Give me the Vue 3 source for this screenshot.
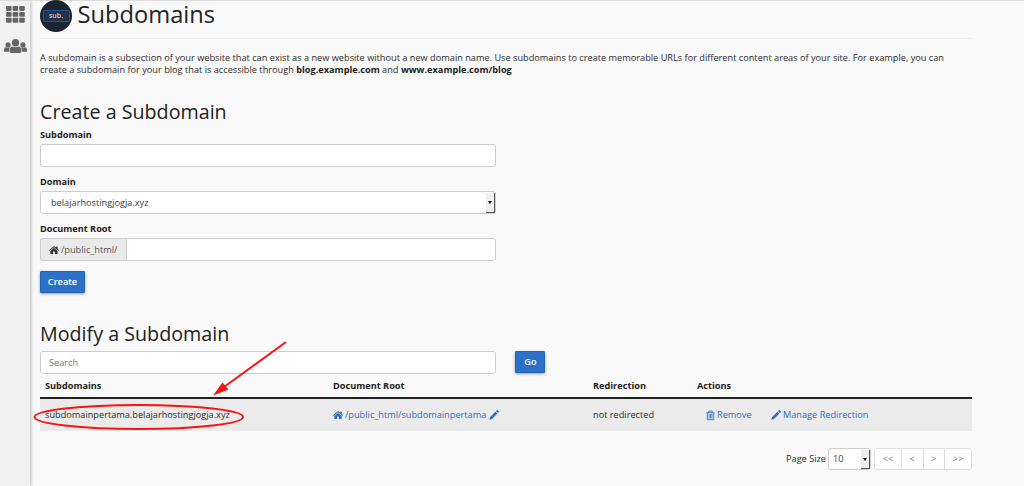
<script setup>
import { ref } from 'vue'

const domain = ref('belajarhostingjogja.xyz')
const subdomain = ref('')
const docRoot = ref('')
const rows = [
  { name: 'subdomainpertama.belajarhostingjogja.xyz', root: '/public_html/subdomainpertama', redirect: 'not redirected' },
]
const pages = ['<<', '<', '>', '>>']
const home = 'M8 1.500 0 8.200l1 1.300 7-5.900 7 5.900 1-1.300-2.200-1.900V2.200h-2.300v2.200zM8 4.700 2.200 9.500v5h4.400v-4h2.800v4h4.400v-5z'
const pencil = 'M1.800 11.200 10.300 2.700l3 3-8.500 8.500L.5 15.500zM11.200 1.800 12.500.5q.7-.6 1.400 0l1.600 1.600q.6.7 0 1.400l-1.300 1.300z'
</script>

<template>
  <div class="page">
    <nav class="side">
      <svg class="grid-icon" viewBox="0 0 19 17">
        <g v-for="r in 3" :key="r">
          <rect v-for="c in 3" :key="c" :x="(c - 1) * 6.6" :y="(r - 1) * 5.900" width="5.600" height="4.900" rx=".8" />
        </g>
      </svg>
      <svg class="people-icon" viewBox="0 0 23 14">
        <circle cx="4.100" cy="5.900" r="2.600" /><circle cx="18.900" cy="5.900" r="2.600" />
        <path d="M0 12.800v-2.300Q0 8.400 2 8.300q2 1 4 .2-1 1.600-.9 4.300zM23 12.800v-2.300q0-2.100-2-2.200-2 1-4 .2 1 1.600.9 4.300z" />
        <circle cx="11.500" cy="3.800" r="3.700" />
        <path d="M5.600 12.200q0-4.600 3-4.700 2.900 1.500 5.800 0 3 .1 3 4.700 0 1.700-1.500 1.700H7.100q-1.500 0-1.500-1.700z" />
      </svg>
    </nav>

    <main class="content">
      <header class="title">
        <span class="logo"><span class="logo-box">sub.</span></span>
        <h1>Subdomains</h1>
      </header>
      <p class="intro">A subdomain is a subsection of your website that can exist as a new website without a new domain name. Use subdomains to create memorable URLs for different content areas of your site. For example, you can<br>create a subdomain for your blog that is accessible through <b>blog.example.com</b> and <b>www.example.com/blog</b></p>

      <h2>Create a Subdomain</h2>
      <section class="form">
        <div class="group">
          <label>Subdomain</label>
          <input v-model="subdomain" class="control">
        </div>
        <div class="group">
          <label>Domain</label>
          <div class="control select"><span>{{ domain }}</span><i class="drop"></i></div>
        </div>
        <div class="group">
          <label>Document Root</label>
          <div class="addon-row">
            <span class="addon"><svg class="ico" viewBox="0 0 16 16"><path :d="home" /></svg>/public_html/</span>
            <input v-model="docRoot" class="control joined">
          </div>
        </div>
        <button class="btn">Create</button>
      </section>

      <h2 class="modify">Modify a Subdomain</h2>
      <div class="search-row">
        <input class="control" placeholder="Search">
        <button class="btn go">Go</button>
      </div>

      <div class="table">
        <div class="tr head">
          <span>Subdomains</span><span>Document Root</span><span>Redirection</span><span>Actions</span>
        </div>
        <div v-for="row in rows" :key="row.name" class="tr body">
          <span>{{ row.name }}</span>
          <span class="link"><svg class="ico" viewBox="0 0 16 16"><path :d="home" /></svg>{{ row.root }}<svg class="ico after" viewBox="0 0 16 16"><path :d="pencil" /></svg></span>
          <span>{{ row.redirect }}</span>
          <span class="link actions">
            <span class="remove"><svg class="ico trash" viewBox="0 0 16 18"><path d="M.5 4h15M5 3.500V1.200h6v2.300M2.300 4.500v12h11.400v-12M5.500 6v8.500M8 6v8.500M10.500 6v8.500" /></svg>Remove</span>
            <span><svg class="ico" viewBox="0 0 16 16"><path :d="pencil" /></svg>Manage Redirection</span>
          </span>
        </div>
      </div>

      <footer class="pager">
        <span class="size-label">Page Size</span>
        <div class="control select size"><span>10</span><i class="drop"></i></div>
        <div class="pages"><span v-for="p in pages" :key="p">{{ p }}</span></div>
      </footer>
    </main>

    <svg class="annotation" viewBox="0 0 1024 486">
      <ellipse cx="138.800" cy="417" rx="104.300" ry="12" />
      <path class="shaft" d="M286 342 224 387" />
      <path class="tip" d="M213 395.500 222.500 382.500 228.500 389.500z" />
    </svg>
  </div>
</template>

<style>
body { margin: 0; background: #f9f9f9; }
</style>

<style scoped>
* { box-sizing: border-box; }
.page { position: relative; display: flex; width: 1024px; height: 486px; background: #f9f9f9; border-top: 1px solid #dcdcdc; color: #2c2c2c; font: 9.195px/12px "Open Sans", "Noto Sans", sans-serif; }
.side { width: 30px; flex: none; background: #f1f1f1; box-shadow: 1px 0 3px #bbb; padding: 5px 0 0 4px; clip-path: inset(0 -6px 0 0); }
.side svg { display: block; fill: #666; }
.grid-icon { width: 19px; height: 17px; margin-left: 2px; }
.people-icon { width: 23px; height: 14px; margin-top: 16px; }
.content { width: 942px; padding-left: 10px; }
.title { display: flex; align-items: flex-start; height: 38px; border-bottom: 1px solid #eee; }
.logo { display: flex; align-items: center; justify-content: center; width: 32px; height: 32px; margin-top: -1px; border-radius: 50%; background: #1b2530; }
.logo-box { width: 27px; height: 12px; border: 1px solid #24549a; border-radius: 2px; background: #24304a; color: #ccc; font-weight: 600; font-size: 7px; line-height: 9px; text-align: center; }
h1 { margin: 0 0 0 5.500px; font-size: 23.7px; line-height: 26px; font-weight: 400; color: #222; }
.intro { margin: 13px 0 0; white-space: nowrap; }
b { color: #222; }
h2 { margin: 21px 0 0; height: 30px; font-size: 19.7px; line-height: 30px; font-weight: 400; color: #222; white-space: nowrap; }
.form { width: 456px; padding-top: 2px; }
.group { height: 47px; }
label { display: block; height: 15px; line-height: 12px; font-weight: 700; color: #222; }
.control { display: block; width: 456px; height: 23px; margin: 0; padding: 0 8px; border: 1px solid #ccc; border-radius: 3px; background: #fff; color: #3c3c3c; font: inherit; outline: none; }
.control::placeholder { color: #777; opacity: 1; }
.select { position: relative; display: flex; align-items: center; padding-left: 10px; }
.drop { position: absolute; top: 1px; right: 0; bottom: 0; width: 9px; background: #eee; border-right: 1px solid #555; border-bottom: 1px solid #555; }
.drop::after { content: ""; position: absolute; left: 2px; top: 8px; border: 2px solid transparent; border-top: 3px solid #111; border-bottom: 0; }
.addon-row { display: flex; }
.addon { display: flex; align-items: center; width: 86px; height: 23px; padding-left: 8px; border: 1px solid #ccc; border-right: 0; border-radius: 3px 0 0 3px; background: #eaeaea; color: #555; white-space: nowrap; }
.joined { width: 370px; border-radius: 0 3px 3px 0; }
.ico { flex: none; width: 10px; height: 10px; margin-right: 2px; fill: currentColor; }
.addon .ico { color: #333; }
.btn { display: block; width: 45px; height: 22px; margin: 1px 0 0; padding: 0; border: 1px solid #2464bd; border-radius: 1px; background: #2b70c9; box-shadow: 0 1px 3px #999; color: #fff; font: 600 9.195px/20px "Open Sans", sans-serif; text-align: center; }
.modify { margin-top: 26px; }
.search-row { display: flex; padding-top: 2px; }
.go { width: 30px; margin: 0 0 0 19.400px; }
.table { width: 932px; }
.tr { display: grid; grid-template-columns: 288px 260px 104px 1fr; padding-left: 5px; align-items: center; white-space: nowrap; }
.head { height: 25px; border-bottom: 2px solid #222; font-weight: 700; color: #222; }
.body { height: 32px; background: #ebebeb; }
.link { display: flex; align-items: center; color: #2f6bbb; }
.after { margin: 0 0 0 3px; }
.actions { padding-left: 9px; }
.actions > span { display: flex; align-items: center; }
.remove { width: 65px; }
.trash { width: 9px; height: 11px; margin-right: 2px; fill: none; stroke: currentColor; stroke-width: 1.500; }
.pager { display: flex; justify-content: flex-end; align-items: center; height: 22px; margin-top: 17px; width: 932px; }
.size { width: 43px; height: 22px; margin: 0 3px 0 2px; padding-left: 4px; }
.pages { display: flex; width: 98px; height: 22px; border: 1px solid #ddd; border-radius: 3px; background: #fff; color: #777; line-height: 20px; }
.pages span { width: 21.500px; text-align: center; border-left: 1px solid #ddd; }
.pages span:first-child { width: 26px; border-left: 0; }
.pages span:last-child { flex: 1; }
.annotation { position: absolute; left: 0; top: -1px; width: 1024px; height: 486px; pointer-events: none; }
.annotation ellipse, .shaft { fill: none; stroke: #f11; stroke-width: 1.900; }
.tip { fill: #f11; }
</style>
